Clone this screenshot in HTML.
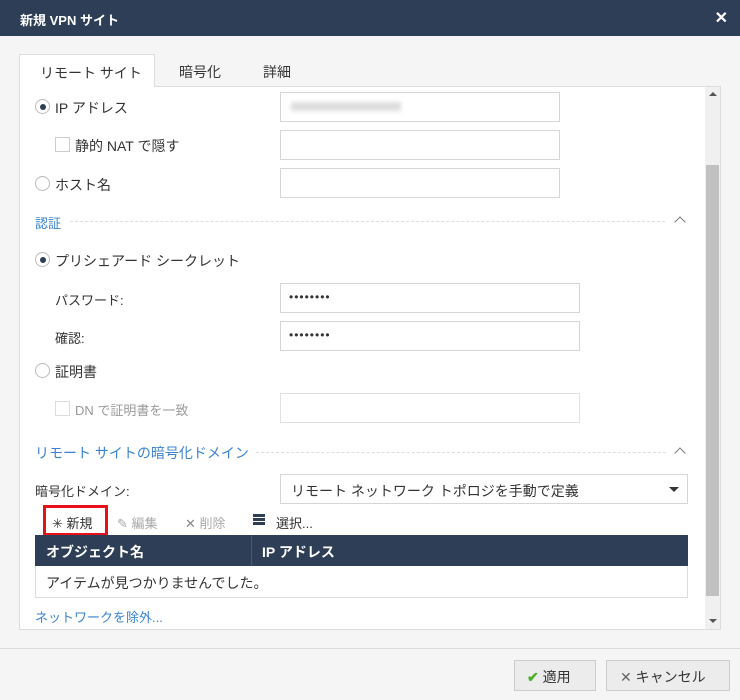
<!DOCTYPE html>
<html><head><meta charset="utf-8"><style>
*{box-sizing:border-box;margin:0;padding:0}
body{width:740px;height:700px;background:#f5f5f5;font-family:"Liberation Sans","Noto Sans CJK JP",sans-serif;font-size:13px;color:#333;position:relative;overflow:hidden}
.a{position:absolute}
.hdr{left:0;top:0;width:740px;height:36px;background:#2e3e56;color:#fff;font-size:13px;font-weight:bold;padding:10px 20px}
.inp{position:absolute;background:#fff;border:1px solid #d6d6d6;height:30px}
.radio{position:absolute;width:15px;height:15px;border:1px solid #bbb;border-radius:50%;background:#fff}
.radio.on::after{content:"";position:absolute;left:3.5px;top:3.5px;width:6px;height:6px;border-radius:50%;background:#2e3e56}
.cb{position:absolute;width:15px;height:15px;border:1px solid #ccc;background:#fff}
.sec{color:#3b83d0;font-size:13px}
.dash{position:absolute;border-top:1px dashed #ddd;height:0}
.chev{position:absolute;width:8px;height:8px;border-left:1px solid #777;border-top:1px solid #777;transform:rotate(45deg)}
.btn{position:absolute;height:31px;border:1px solid #ccc;background:#ececec;font-size:14px;padding:6px 0}
</style></head><body>
<div class="a hdr">新規 VPN サイト</div>
<div class="a" style="right:12px;top:8px;color:#fff;font-size:16px;font-weight:bold">✕</div>

<div class="a" style="left:19px;top:86px;width:702px;height:544px;background:#fff;border:1px solid #ddd"></div>
<div class="a" style="left:19px;top:54px;width:136px;height:33px;background:#fff;border:1px solid #ddd;border-bottom:none;padding:8px 0 0 20px;font-size:14px">リモート サイト</div>
<div class="a" style="left:179px;top:62px;font-size:14px">暗号化</div>
<div class="a" style="left:263px;top:62px;font-size:14px">詳細</div>

<!-- scrollbar -->
<div class="a" style="left:705px;top:87px;width:15px;height:542px;background:#f0f0f0"></div>
<div class="a" style="left:706px;top:165px;width:13px;height:431px;background:#c1c1c1"></div>
<div class="a" style="left:709px;top:92px;border:4px solid transparent;border-bottom:4px solid #555;border-top:none"></div>
<div class="a" style="left:709px;top:619px;border:4px solid transparent;border-top:4px solid #555;border-bottom:none"></div>

<div class="radio on" style="left:35px;top:99px"></div>
<div class="a" style="left:55px;top:98px;font-size:14px">IP アドレス</div>
<div class="inp" style="left:280px;top:92px;width:280px"><div style="margin:9px 10px;width:110px;height:9px;background:#ddd;filter:blur(2px)"></div></div>
<div class="cb" style="left:55px;top:137px"></div>
<div class="a" style="left:75px;top:136px;font-size:14px">静的 NAT で隠す</div>
<div class="inp" style="left:280px;top:130px;width:280px"></div>
<div class="radio" style="left:35px;top:176px"></div>
<div class="a" style="left:55px;top:175px;font-size:14px">ホスト名</div>
<div class="inp" style="left:280px;top:168px;width:280px"></div>

<div class="a sec" style="left:35px;top:213px">認証</div>
<div class="dash" style="left:70px;top:221px;width:595px"></div>
<div class="chev" style="left:676px;top:218px"></div>

<div class="radio on" style="left:35px;top:252px"></div>
<div class="a" style="left:55px;top:251px;font-size:14px">プリシェアード シークレット</div>
<div class="a" style="left:55px;top:290px">パスワード:</div>
<div class="inp" style="left:280px;top:283px;width:300px;padding:6px 8px;font-size:12px;letter-spacing:1px">••••••••</div>
<div class="a" style="left:55px;top:328px">確認:</div>
<div class="inp" style="left:280px;top:321px;width:300px;padding:6px 8px;font-size:12px;letter-spacing:1px">••••••••</div>
<div class="radio" style="left:35px;top:363px"></div>
<div class="a" style="left:55px;top:362px;font-size:14px">証明書</div>
<div class="cb" style="left:55px;top:401px;border-color:#ddd"></div>
<div class="a" style="left:75px;top:400px;color:#999">DN で証明書を一致</div>
<div class="inp" style="left:280px;top:393px;width:300px;border-color:#e2e2e2"></div>

<div class="a sec" style="left:35px;top:443px;font-size:14px">リモート サイトの暗号化ドメイン</div>
<div class="dash" style="left:256px;top:452px;width:410px"></div>
<div class="chev" style="left:676px;top:449px"></div>

<div class="a" style="left:35px;top:481px">暗号化ドメイン:</div>
<div class="inp" style="left:280px;top:474px;width:408px;padding:6px 10px;font-size:14px">リモート ネットワーク トポロジを手動で定義</div>
<div class="a" style="left:669px;top:487px;border:5px solid transparent;border-top:5px solid #333;border-bottom:none"></div>

<div class="a" style="left:43px;top:505px;width:65px;height:31px;border:3px solid #e8101a"></div>
<div class="a" style="left:52px;top:513px;font-size:13px">✳ 新規</div>
<div class="a" style="left:117px;top:513px;color:#aaa">✎ 編集</div>
<div class="a" style="left:185px;top:513px;color:#aaa"><span style="color:#888">✕</span> 削除</div>
<div class="a" style="left:253px;top:514px;width:12px;height:3px;background:#2e3e56;box-shadow:0 4px 0 #2e3e56,0 8px 0 #2e3e56"></div>
<div class="a" style="left:276px;top:513px">選択...</div>

<div class="a" style="left:35px;top:535px;width:653px;height:31px;background:#2e3e56;color:#fff;font-weight:bold;font-size:14px">
<div class="a" style="left:11px;top:7px">オブジェクト名</div>
<div class="a" style="left:216px;top:0;width:1px;height:31px;background:#4a5a72"></div>
<div class="a" style="left:227px;top:7px">IP アドレス</div></div>
<div class="a" style="left:35px;top:566px;width:653px;height:32px;border:1px solid #ddd;border-top:none;padding:7px 10px;font-size:14px">アイテムが見つかりませんでした。</div>
<div class="a sec" style="left:35px;top:607px">ネットワークを除外...</div>

<div class="a" style="left:0;top:648px;width:740px;height:1px;background:#ddd"></div>
<div class="btn" style="left:514px;top:660px;width:82px;padding-left:12px"><span style="color:#4caf28;font-weight:bold">✔</span> 適用</div>
<div class="btn" style="left:606px;top:660px;width:124px;padding-left:13px"><span style="color:#666">✕</span> キャンセル</div>
</body></html>
